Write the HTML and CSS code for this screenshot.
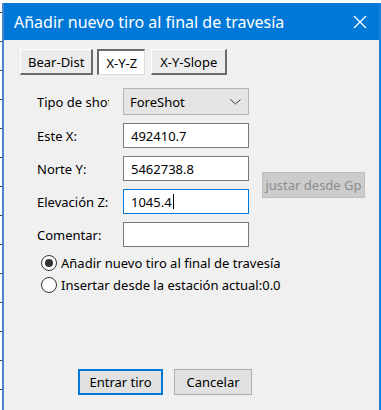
FILE: index.html
```html
<!DOCTYPE html>
<html lang="es">
<head>
<meta charset="utf-8">
<title>Añadir nuevo tiro al final de travesía</title>
<link rel="stylesheet" href="styles.css">
</head>
<body>
<div class="desk">
  <div class="window">
    <div class="titlebar">
      <span class="title">Añadir nuevo tiro al final de travesía</span>
      <svg class="close" width="14" height="14" viewBox="0 0 14 14"><path d="M1 1 L13 13 M13 1 L1 13" stroke="#fff" stroke-width="1.3" fill="none"/></svg>
    </div>
    <div class="content">
      <div class="tabs">
        <div class="tab">Bear-Dist</div>
        <div class="tab tab-on">X-Y-Z</div>
        <div class="tab tab-wide">X-Y-Slope</div>
      </div>
      <div class="form">
        <div class="label"><span class="clip">Tipo de shot</span></div>
        <div class="select">ForeShot<svg class="chev" width="11" height="6" viewBox="0 0 11 6"><path d="M0.5 0.5 L5.5 5 L10.5 0.5" stroke="#333" stroke-width="1" fill="none"/></svg></div>
        <div></div>
        <div class="label">Este X:</div>
        <div class="input">492410.7</div>
        <div></div>
        <div class="label">Norte Y:</div>
        <div class="input">5462738.8</div>
        <div class="side"><div class="btn-disabled">justar desde Gp</div></div>
        <div class="label">Elevación Z:</div>
        <div class="input input-focus">1045.4<span class="caret"></span></div>
        <div class="label">Comentar:</div>
        <div class="input"></div>
        <div></div>
      </div>
      <div class="radios">
        <div class="radio"><span class="dot dot-on"></span>Añadir nuevo tiro al final de travesía</div>
        <div class="radio"><span class="dot"></span>Insertar desde la estación actual:0.0</div>
      </div>
      <div class="actions">
        <div class="btn btn-default">Entrar tiro</div>
        <div class="btn btn-cancel">Cancelar</div>
      </div>
    </div>
  </div>
</div>
</body>
</html>
```
FILE: styles.css
```css
* { box-sizing: border-box; }
html, body { margin: 0; padding: 0; }
body {
  width: 381px;
  height: 410px;
  overflow: hidden;
  background: #fff;
  font-family: "Noto Sans", "Liberation Sans", sans-serif;
  font-size: 13px;
  color: #000;
}
.desk {
  height: 410px;
  padding-top: 3px;
  padding-left: 2px;
  background-color: #fff;
  background-image: linear-gradient(to bottom, transparent 0 12px, #3a3a3a 12px 13px, transparent 13px);
  background-size: 2px 29px;
  background-repeat: repeat-y;
}
.window {
  width: 379px;
  height: 420px;
  border-left: 2px solid #4a86c8;
  border-right: 2px solid #1a80d8;
  background: #f0f0f0;
}
.titlebar {
  height: 37px;
  background: #0078d7;
  color: #fff;
  display: flex;
  align-items: center;
  padding-left: 10px;
  padding-right: 12px;
  font-size: 16px;
}
.title { flex: 1; }
.close { display: block; }
.content {
  border-top: 1px solid #e8eef5;
  padding-top: 8px;
}
.tabs {
  display: flex;
  padding-left: 16px;
  height: 26px;
}
.tab {
  height: 26px;
  padding: 0 7px;
  display: flex;
  align-items: center;
  background: #ececec;
  border-top: 1px solid #fff;
  border-left: 1px solid #fff;
  border-right: 2px solid #6a6a6a;
  border-bottom: 2px solid #6a6a6a;
  margin-right: 4px;
}
.tab-on {
  background: #fff;
  border-top: 2px solid #6a6a6a;
  border-left: 2px solid #6a6a6a;
  border-right: 1px solid #dcdcdc;
  border-bottom: 1px solid #dcdcdc;
  margin-right: 6px;
}
.tab-wide { padding: 0 8px; }
.form {
  display: grid;
  grid-template-columns: 86px 126px 116px;
  grid-template-rows: 27px 25px 25px 25px 25px;
  row-gap: 8px;
  padding-left: 33px;
  margin-top: 13px;
  align-items: center;
}
.label { white-space: nowrap; }
.clip {
  display: inline-block;
  width: 72px;
  overflow: hidden;
  vertical-align: top;
}
.select {
  height: 27px;
  background: #e5e5e5;
  border: 1px solid #b4b4b4;
  display: flex;
  align-items: center;
  justify-content: space-between;
  padding: 0 7px 0 6px;
}
.input {
  height: 25px;
  background: #fff;
  border: 1px solid #7a7a7a;
  padding-left: 7px;
  display: flex;
  align-items: center;
}
.input-focus { border-color: #0078d7; }
.caret {
  display: inline-block;
  width: 1px;
  height: 15px;
  background: #000;
  margin-left: 1px;
}
.side {
  grid-row: 3 / span 2;
  grid-column: 3;
  align-self: center;
  padding-left: 13px;
}
.btn-disabled {
  height: 26px;
  background: #cccccc;
  border: 1px solid #bfbfbf;
  color: #8d8d8d;
  display: flex;
  align-items: center;
  justify-content: center;
  white-space: nowrap;
  overflow: hidden;
}
.radios {
  padding-left: 37px;
  margin-top: 5px;
}
.radio {
  height: 22px;
  display: flex;
  align-items: center;
  white-space: nowrap;
}
.dot {
  width: 16px;
  height: 16px;
  border: 1px solid #333;
  border-radius: 50%;
  background: #fff;
  margin-right: 4px;
  display: flex;
  align-items: center;
  justify-content: center;
}
.dot-on::after {
  content: "";
  width: 8px;
  height: 8px;
  border-radius: 50%;
  background: #333;
}
.actions {
  display: flex;
  gap: 11px;
  padding-left: 74px;
  margin-top: 73px;
}
.btn {
  height: 26px;
  background: #e1e1e1;
  display: flex;
  align-items: center;
  justify-content: center;
}
.btn-default {
  width: 85px;
  border: 2px solid #0078d7;
}
.btn-cancel {
  width: 78px;
  border: 1px solid #adadad;
}
```
